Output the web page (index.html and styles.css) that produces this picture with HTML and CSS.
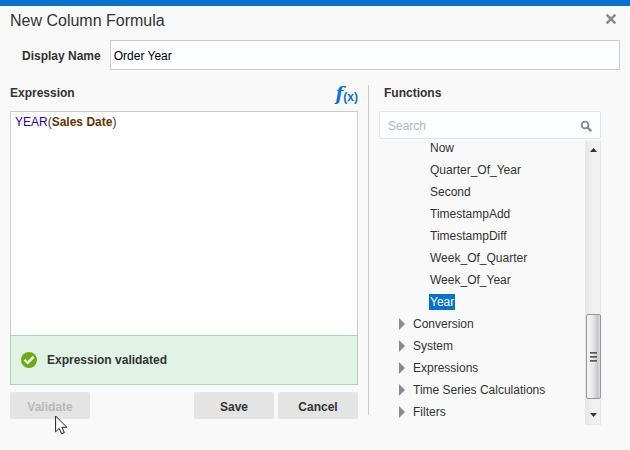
FILE: index.html
```
<!DOCTYPE html>
<html lang="en">
<head>
    <meta charset="UTF-8">
    <meta name="viewport" content="width=device-width, initial-scale=1.0">
    <title>New Column Formula</title>
    <link rel="stylesheet" href="styles.css">
</head>
<body>
    <form class="dialog">
        <div class="dialog-header">
            <h1>New Column Formula</h1>
            <button type="button" class="close" aria-label="Close">
                <svg width="12" height="12" viewBox="0 0 12 12"><path d="M1.6 1.6 10.4 10.4M10.4 1.6 1.6 10.4" stroke="#878c91" stroke-width="2.6"/></svg>
            </button>
        </div>

        <div class="name-row">
            <label for="displayName">Display Name</label>
            <input type="text" id="displayName" name="displayName" value="Order Year">
        </div>

        <div class="columns">
            <div class="expression">
                <div class="expression-header">
                    <h2 id="expressionLabel">Expression</h2>
                    <button type="button" class="fx" aria-label="Functions"><span class="fx-f">f</span><span class="fx-x">(x)</span></button>
                </div>
                <!-- contenteditable so the tokens can be coloured -->
                <div class="editor" contenteditable="true" role="textbox" aria-multiline="true" aria-labelledby="expressionLabel" spellcheck="false"><span class="token-function">YEAR</span>(<span class="token-column">Sales Date</span>)</div>
                <div class="message" role="status">
                    <svg width="16" height="16" viewBox="0 0 16 16"><circle cx="8" cy="8" r="8" fill="#6fac14"/><path d="M3.4 7.8 6.7 10.8 12.6 4.8" fill="none" stroke="#fff" stroke-width="2.5"/></svg>
                    <span>Expression validated</span>
                </div>
                <div class="buttons">
                    <button type="button" class="btn validate" disabled>Validate</button>
                    <button type="submit" class="btn">Save</button>
                    <button type="button" class="btn">Cancel</button>
                    <svg class="pointer" width="13" height="20" viewBox="0 0 13 20"><path d="M.6 1v15.8l3.6-3.4 2.5 5.4 2.6-1.2-2.4-5.3h5Z" fill="#fff" stroke="#1c1c30"/></svg>
                </div>
            </div>

            <div class="functions">
                <h2>Functions</h2>
                <div class="search">
                    <input type="text" placeholder="Search" aria-label="Search">
                    <svg width="12" height="12" viewBox="0 0 12 12"><circle cx="5" cy="5" r="3.4" fill="none" stroke="#878c91" stroke-width="1.9"/><path d="M7.4 7.4l3.8 3.8" stroke="#878c91" stroke-width="2.4"/></svg>
                </div>
                <div class="tree">
                    <ul>
                        <li class="leaf"><span>Now</span></li>
                        <li class="leaf"><span>Quarter_Of_Year</span></li>
                        <li class="leaf"><span>Second</span></li>
                        <li class="leaf"><span>TimestampAdd</span></li>
                        <li class="leaf"><span>TimestampDiff</span></li>
                        <li class="leaf"><span>Week_Of_Quarter</span></li>
                        <li class="leaf"><span>Week_Of_Year</span></li>
                        <li class="leaf selected"><span>Year</span></li>
                        <li class="folder"><span>Conversion</span></li>
                        <li class="folder"><span>System</span></li>
                        <li class="folder"><span>Expressions</span></li>
                        <li class="folder"><span>Time Series Calculations</span></li>
                        <li class="folder"><span>Filters</span></li>
                    </ul>
                    <div class="scrollbar" aria-hidden="true">
                        <svg width="7" height="4" viewBox="0 0 7 4"><path d="M0 4 3.5 0 7 4Z" fill="#333"/></svg>
                        <div class="thumb"><i></i><i></i><i></i></div>
                        <svg width="7" height="4" viewBox="0 0 7 4"><path d="M0 0h7L3.5 4Z" fill="#333"/></svg>
                    </div>
                </div>
            </div>
        </div>
    </form>
</body>
</html>
```
FILE: styles.css
```
* {
    box-sizing: border-box;
}
body {
    margin: 0;
    min-height: 100vh;
    background-color: #f9f9f9;
    border-top: 6px solid #0572ce;
    color: #333;
    font-family: "Liberation Sans", Arial, sans-serif;
    font-size: 12px;
    line-height: 16px;
}
h1, h2, ul {
    margin: 0;
    padding: 0;
}
h1 {
    font-size: 16px;
    font-weight: normal;
    line-height: 20px;
}
h2 {
    font-size: 12px;
    line-height: 16px;
}
button, input {
    font: inherit;
    color: inherit;
}
.dialog {
    padding: 5px 10px 24px;
}
.dialog-header {
    display: flex;
    justify-content: space-between;
    padding-bottom: 9px;
}
.close {
    width: 18px;
    height: 16px;
    padding: 0;
    border: none;
    background: none;
    line-height: 0;
    cursor: pointer;
}
.name-row {
    display: flex;
    align-items: center;
    gap: 9px;
    padding-left: 12px;
}
.name-row label {
    padding-top: 2px;
    font-weight: bold;
}
.name-row input {
    flex: 1;
    min-width: 0;
    height: 30px;
    padding: 2px 3px 0;
    border: 1px solid #ccc;
    background-color: #fcfdff;
    color: #000;
}
.columns {
    display: flex;
    gap: 10px;
    padding: 15px 19px 0 0;
}
.expression {
    flex: 1;
    min-width: 0;
}
.expression-header {
    display: flex;
    justify-content: space-between;
    height: 26px;
}
.fx {
    display: flex;
    align-items: flex-end;
    height: 19px;
    padding: 0;
    border: none;
    background: none;
    color: #0572ce;
    font-weight: bold;
    cursor: pointer;
}
.fx-f {
    font-family: "DejaVu Serif", serif;
    font-size: 18px;
    font-style: italic;
    line-height: 20px;
}
.fx-x {
    font-size: 12px;
    line-height: 14px;
}
.editor {
    height: 224px;
    padding: 2px 4px;
    border: 1px solid #ccc;
    border-bottom: none;
    background-color: #fff;
    outline: none;
}
.token-function {
    color: #3300aa;
}
.token-column {
    color: #663300;
    font-weight: bold;
}
.message {
    display: flex;
    align-items: center;
    gap: 10px;
    height: 50px;
    padding: 0 10px;
    border: 1px solid #a3dab4;
    background-color: #e1f3e6;
    font-weight: bold;
}
.buttons {
    position: relative;
    display: flex;
    gap: 4px;
    padding-top: 7px;
}
.btn {
    width: 80px;
    height: 27px;
    padding: 2px 0 0;
    border: none;
    border-radius: 2px;
    background-color: #e4e4e4;
    font-weight: bold;
    cursor: pointer;
}
.validate {
    margin-right: auto;
    color: #b8b8b8;
}
.pointer {
    position: absolute;
    top: 30px;
    left: 45px;
}
.functions {
    position: relative;
    width: 233px;
    padding-left: 11px;
}
/* divider stops above the end of the list */
.functions::before {
    content: "";
    position: absolute;
    top: 0;
    bottom: 10px;
    left: 0;
    border-left: 1px solid #ccc;
}
.functions h2 {
    padding-left: 5px;
    height: 26px;
}
.search {
    display: flex;
    align-items: center;
    height: 28px;
    padding: 2px 8px 0;
    border: 1px solid #dfe4e7;
    border-radius: 2px;
    background-color: #fcfdff;
}
.search input {
    flex: 1;
    min-width: 0;
    padding: 0;
    border: none;
    background: none;
    outline: none;
}
.search input::placeholder {
    color: #b4b8bc;
}
.tree {
    display: flex;
    justify-content: space-between;
    align-items: flex-end;
    padding-top: 1px;
}
.tree ul {
    display: flex;
    flex-direction: column;
    gap: 6px;
    align-self: flex-start;
    list-style: none;
}
.tree li {
    display: flex;
    align-items: center;
    height: 16px;
    white-space: nowrap;
}
.leaf {
    padding-left: 50px;
}
.leaf span {
    padding: 0 1px;
}
.selected span {
    background-color: #0572ce;
    color: #fff;
}
.folder {
    gap: 8px;
    padding-left: 20px;
}
.folder::before {
    content: "";
    border: solid transparent;
    border-width: 6px 0 6px 6px;
    border-left-color: #878c91;
}
.scrollbar {
    display: flex;
    flex-direction: column;
    align-items: center;
    width: 16px;
    height: 284px;
    margin-top: 1px;
    padding: 7px 0;
    border: 1px solid #e6e6e6;
    border-top: none;
    background: linear-gradient(to right, #e8e8e8, #f1f1f1 50%, #f1f1f1);
}
.thumb {
    display: flex;
    flex-direction: column;
    align-items: center;
    justify-content: center;
    gap: 2px;
    width: 15px;
    height: 85px;
    margin: auto 0 14px;
    border: 1px solid #979797;
    border-radius: 2px;
    background: linear-gradient(to right, #f5f5f5, #e8e8ea 45%, #c8c8cc 80%, #dcdcdc);
}
.thumb i {
    width: 7px;
    height: 2px;
    background: linear-gradient(#444, #999);
}
```
